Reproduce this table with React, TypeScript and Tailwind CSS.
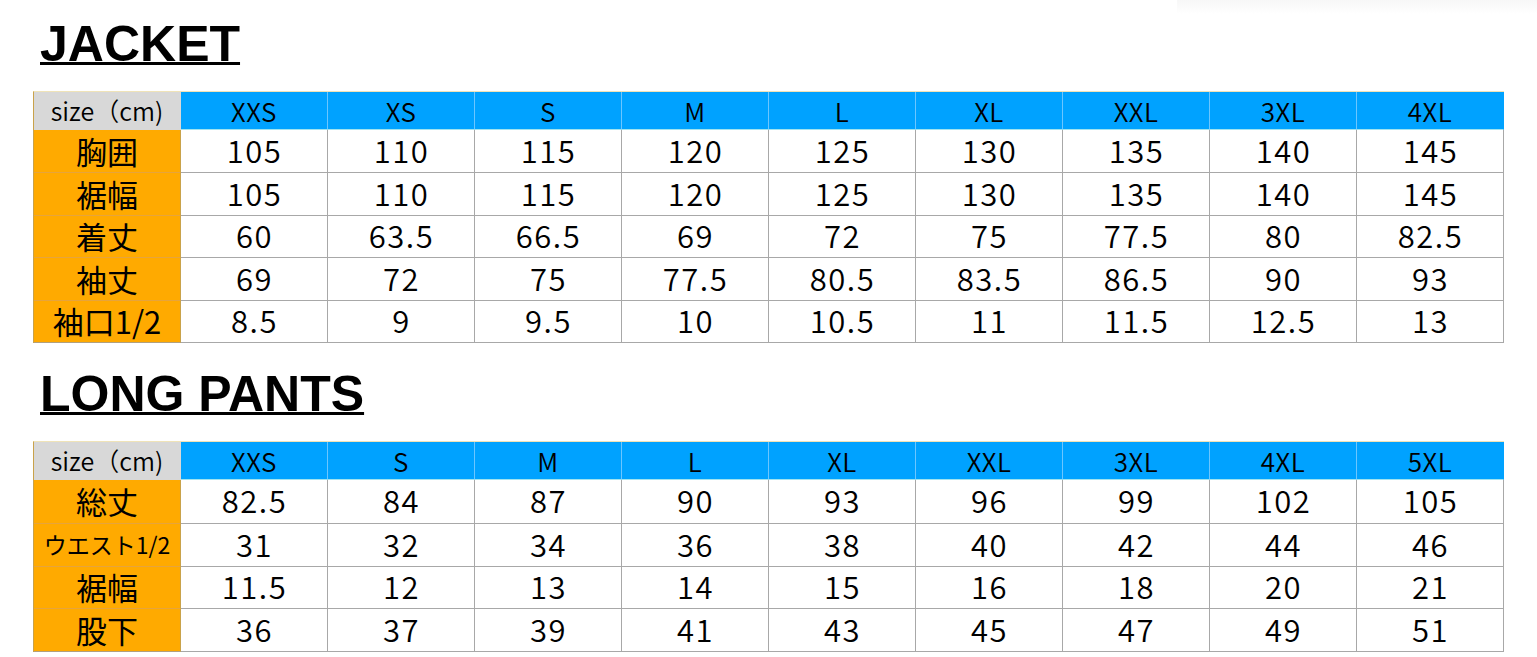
import React from "react";

const FONT = { fontFamily: '"Noto Sans CJK JP", "Noto Sans", sans-serif' };

type Row = { label: string; small?: boolean; values: (string | number)[] };

function SizeTable({
  sizes,
  rows,
  rowHeights,
}: {
  sizes: string[];
  rows: Row[];
  rowHeights: string;
}) {
  return (
    <div
      className={`grid w-fit grid-cols-[repeat(10,147px)] ${rowHeights} border-l border-t border-l-[#c9a24a] border-t-[#efe3b8] text-black`}
      style={FONT}
    >
      <div className="flex items-center justify-center bg-[#d8d8d8] border-r border-b border-r-[#d8d8d8] border-b-[#d8d8d8] text-[25px] leading-none font-[350]">
        size（cm)
      </div>
      {sizes.map((s, i) => (
        <div
          key={s + i}
          className={`flex items-center justify-center bg-[#00a2ff] border-b border-b-[#9fe3f0] text-[26px] leading-none pt-[1px] font-[350] tracking-[0.5px] ${
            i < sizes.length - 1 ? "border-r border-r-[#6cc6ff]" : "border-r border-r-[#00a2ff]"
          }`}
        >
          {s}
        </div>
      ))}
      {rows.map((r, ri) => (
        <React.Fragment key={r.label + ri}>
          <div
            className={`flex items-center justify-center bg-[#ffaa00] border-r border-b border-r-[#c9a24a] pb-[2px] font-normal ${
              ri < rows.length - 1 ? "border-b-[#e6a43c]" : "border-b-[#b0a080]"
            } ${r.small ? "text-[23px]" : "text-[31px]"} leading-none`}
          >
            {r.label}
          </div>
          {r.values.map((v, vi) => (
            <div
              key={vi}
              className="flex items-center justify-center bg-white border-r border-b border-[#a8a8a8] text-[31px] leading-none pb-[4px] pl-[1px] font-[350] tracking-[1.5px]"
            >
              {v}
            </div>
          ))}
        </React.Fragment>
      ))}
    </div>
  );
}

function Title({ children }: { children: React.ReactNode }) {
  return (
    <div
      className="ml-[7px] h-[50px] w-fit text-[50px] leading-[50px] font-bold text-black underline decoration-[2.5px] underline-offset-[1px]"
      style={{ fontFamily: '"Liberation Sans", Arial, sans-serif' }}
    >
      {children}
    </div>
  );
}

export default function App() {
  const jacketSizes = ["XXS", "XS", "S", "M", "L", "XL", "XXL", "3XL", "4XL"];
  const jacketRows: Row[] = [
    { label: "胸囲", values: [105, 110, 115, 120, 125, 130, 135, 140, 145] },
    { label: "裾幅", values: [105, 110, 115, 120, 125, 130, 135, 140, 145] },
    { label: "着丈", values: [60, 63.5, 66.5, 69, 72, 75, 77.5, 80, 82.5] },
    { label: "袖丈", values: [69, 72, 75, 77.5, 80.5, 83.5, 86.5, 90, 93] },
    { label: "袖口1/2", values: [8.5, 9, 9.5, 10, 10.5, 11, 11.5, 12.5, 13] },
  ];
  const pantsSizes = ["XXS", "S", "M", "L", "XL", "XXL", "3XL", "4XL", "5XL"];
  const pantsRows: Row[] = [
    { label: "総丈", values: [82.5, 84, 87, 90, 93, 96, 99, 102, 105] },
    { label: "ウエスト1/2", small: true, values: [31, 32, 34, 36, 38, 40, 42, 44, 46] },
    { label: "裾幅", values: [11.5, 12, 13, 14, 15, 16, 18, 20, 21] },
    { label: "股下", values: [36, 37, 39, 41, 43, 45, 47, 49, 51] },
  ];

  return (
    <div className="relative w-[1537px] h-[657px] bg-white overflow-hidden">
      <div className="pointer-events-none absolute right-0 top-0 h-[14px] w-[360px] bg-gradient-to-b from-[#f7f7f7] to-white" />
      <div className="flex flex-col pl-[33px] pt-[19px]">
        <Title>JACKET</Title>
        <div className="mt-[22px]">
          <SizeTable
            sizes={jacketSizes}
            rows={jacketRows}
            rowHeights="grid-rows-[38px_43px_43px_42px_43px_42px]"
          />
        </div>
        <div className="mt-[26px]">
          <Title>LONG PANTS</Title>
        </div>
        <div className="mt-[22px]">
          <SizeTable
            sizes={pantsSizes}
            rows={pantsRows}
            rowHeights="grid-rows-[38px_44px_43px_42px_43px]"
          />
        </div>
      </div>
    </div>
  );
}
